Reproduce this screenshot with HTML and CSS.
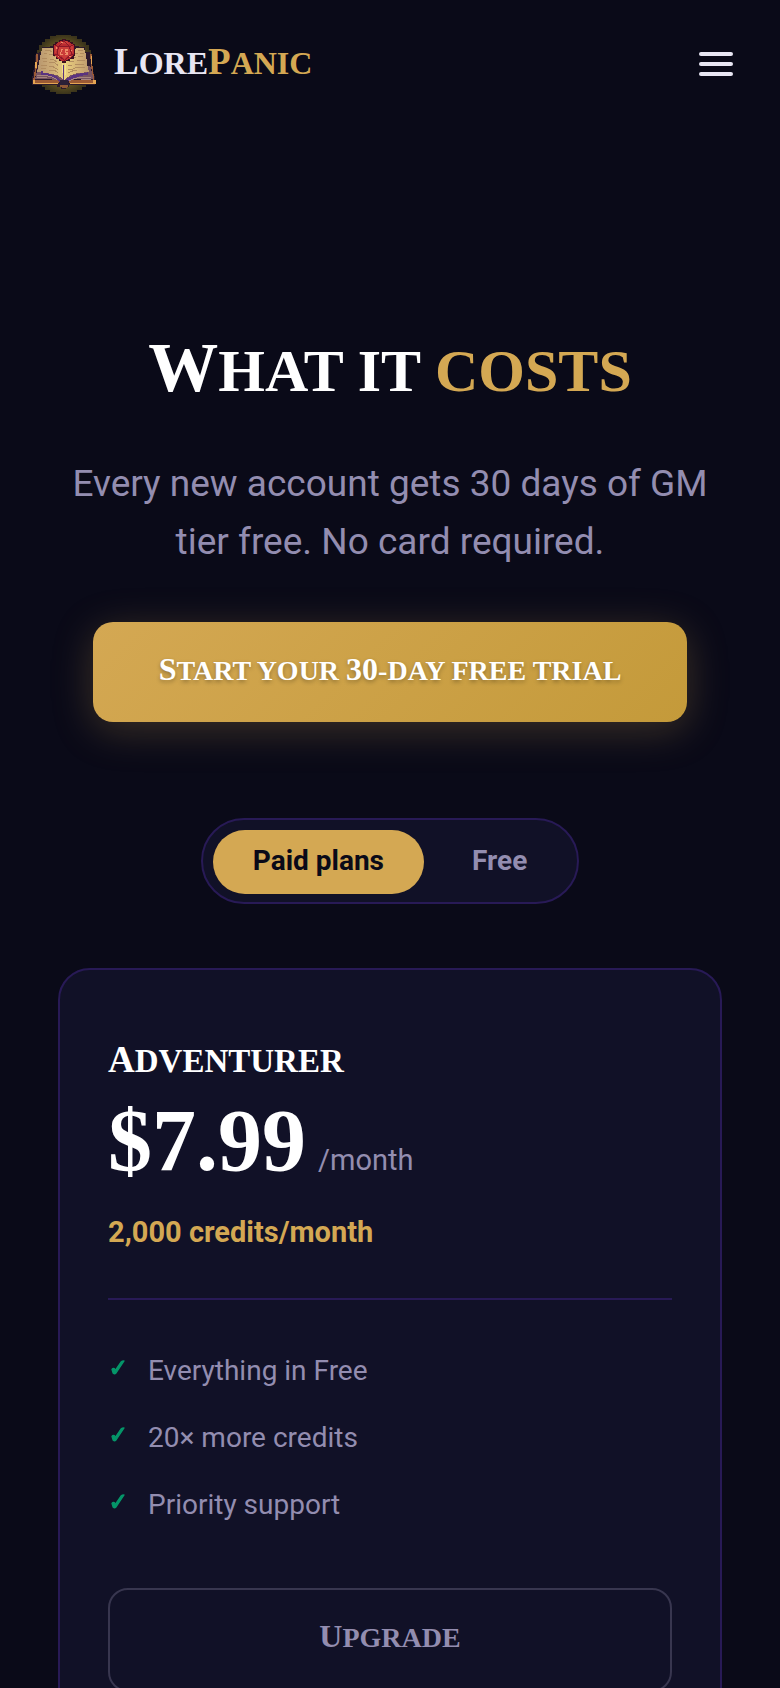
FILE: index.html
```html
<!DOCTYPE html>
<html lang="en">
<head>
<meta charset="utf-8">
<meta name="viewport" content="width=device-width, initial-scale=1">
<title>LorePanic – Pricing</title>
<link rel="stylesheet" href="styles.css">
</head>
<body>
<header class="site-header">
  <a class="brand" href="#">
    <svg class="brand-mark" viewBox="36 38 192 186" shape-rendering="crispEdges" aria-hidden="true">
      <defs>
        <radialGradient id="glow">
          <stop offset="0" stop-color="#a58e38"/>
          <stop offset=".65" stop-color="#665823"/>
          <stop offset="1" stop-color="#3b341b"/>
        </radialGradient>
        <linearGradient id="left-page">
          <stop offset="0" stop-color="#b7966e"/>
          <stop offset=".6" stop-color="#cfae78"/>
          <stop offset="1" stop-color="#e5cc7c"/>
        </linearGradient>
        <linearGradient id="right-page">
          <stop offset="0" stop-color="#ecd47e"/>
          <stop offset=".5" stop-color="#d6b577"/>
          <stop offset="1" stop-color="#bd9a6e"/>
        </linearGradient>
      </defs>
      <path fill="url(#glow)" d="M108 43h46v5h18v7h14v9h11v11h9v13h6v15h4v58h-4v15h-6v13h-9v11h-11v9h-14v7h-18v5h-46v-5H90v-7H76v-9H65v-11h-9v-13h-6v-15h-4v-58h4V88h6V75h9V64h11v-9h14v-7h18z"/>
      <path fill="#2b1a2c" d="M47 99h9v-3h10V80h24v-3h18v5h12v10h24V83h12v-5h20v3h20v14h14v8h5v26l10 46v20h-77v6h-10v5h-16v-5h-10v-6H36v-19l9-51z"/>
      <path fill="#9b5a35" d="M49 102h5v14l-9 62h72v9H39v-9l3-8zM210 102h5v18l8 58v9h-75v-9h70z"/>
      <path fill="#e5a552" d="M38 180h7v12h-7zM220 180h7v12h-7zM45 188h70v4H45zM151 188h68v4h-68zM46 124h4v20h-4zM212 108h3v24h-3z"/>
      <path fill="#775461" d="M55 138l-10 38h38l28 3 11 6 9 4 9-4 12-7 37-2h31l-9-39z"/>
      <path fill="url(#left-page)" d="M71 82h24l13 5 12 13 11 15v64l-16-13-23-6-41-5 8-39 8-34z"/>
      <path fill="url(#right-page)" d="M132 115l12-15 14-12 14-5h20l5 17 5 34 5 21-37 4-20 7-18 13z"/>
      <path fill="#5a3380" d="M64 151h4v6l24 4 18 7 15 13v8l-20-14-24-7-18-3zM129 133h4v52h-4zM138 177l20-12 20-5 25-4v7l-26 5-20 7-18 13z"/>
      <path fill="#f3df91" d="M127 127h3v32h-3zM134 120h4v44h-4z"/>
      <path fill="none" stroke="#b28d60" stroke-width="3" d="M76 91h14l7 4M72 100h9m6 3h10l7 5M67 113h15m7 4h10l12 8M69 124h11m7 3h17l11 9M62 136h18m7 3h12l16 10M62 145h17m8 4h14l12 7M174 91h14M164 100h10m7-2h10M153 111h14m6-2h15M146 124h16m8-3h24M144 135h12m8-3h27M143 148h13l12-7h28M144 158l16-7h12"/>
      <path fill="none" stroke="#a6857e" stroke-width="3" d="M52 164h22l22 6 14 7M147 181l18-7 18-3h30M52 172h28M184 177h30"/>
      <path fill="#2b2037" d="M119 180h24v11h9v4h-14v6h-14v-6h-14v-4h9z"/>
      <path fill="#8f5936" d="M120 195h25v4h-5v3h-15v-3h-5z"/>
      <path fill="#3d1020" d="M126 55h12v5h11v5h10v6h7v36h-5v8h-10v7h-12v5h-12v-5h-11v-6h-9v-8h-7V71h6v-6h10v-5h10z"/>
      <path fill="#b92c30" d="M122 61h19l11 8 9 5v29l-9 11-17 8h-9l-14-9-9-10V75l9-6z"/>
      <path fill="#cb3d39" d="M123 63h16l10 8-32 1zM105 78h10l-7 19h-4zM152 78h8v20h-4zM118 79h28l7 21-19 15-21-15z"/>
      <path fill="none" stroke="#8b1728" stroke-width="3" d="M132 61l-16 17-12-3M132 61l16 17 12-3M116 78h32l7 24-22 18-22-18zM103 102h8m43 0h8"/>
      <path fill="#ee8d69" d="M123 87h7v3h-4v6h-4v4h8v3h-11v-8h4zM135 87h8v4h-5v3h5v9h-9v-3h5v-3h-5zM124 64h5v4h-5zM107 81h4v4h-4zM153 89h4v4h-4zM113 106h4v4h-4zM148 107h4v4h-4z"/>
    </svg>
    <span class="brand-name"><span class="titling">Lore</span><span class="titling gold">Panic</span></span>
  </a>
  <button class="menu-button" type="button" aria-label="Menu">
    <span class="menu-bar"></span><span class="menu-bar"></span><span class="menu-bar"></span>
  </button>
</header>
<main class="page">
  <section class="hero">
    <h1 class="hero-title titling">What it <span class="gold">costs</span></h1>
    <p class="hero-text">Every new account gets 30 days of GM tier free. No card required.</p>
    <a class="cta" href="#"><span class="titling">Start your <span class="numeral">30</span>-day free trial</span></a>
  </section>
  <div class="plan-toggle" role="group" aria-label="Plan type">
    <button class="plan-tab plan-tab-active" type="button" aria-pressed="true">Paid plans</button>
    <button class="plan-tab" type="button" aria-pressed="false">Free</button>
  </div>
  <article class="plan-card">
    <h2 class="plan-name titling">Adventurer</h2>
    <p class="plan-price"><span class="amount">$7.99</span><span class="period">/month</span></p>
    <p class="plan-credits">2,000 credits/month</p>
    <ul class="features">
      <li><svg class="tick" viewBox="0 0 42 45" aria-hidden="true"><path d="M3 28Q6 24 10 26L13 31 31 5Q33 3 39 3L15 39Q11 43 7 40 5 36 3 28z"/></svg>Everything in Free</li>
      <li><svg class="tick" viewBox="0 0 42 45" aria-hidden="true"><path d="M3 28Q6 24 10 26L13 31 31 5Q33 3 39 3L15 39Q11 43 7 40 5 36 3 28z"/></svg>20× more credits</li>
      <li><svg class="tick" viewBox="0 0 42 45" aria-hidden="true"><path d="M3 28Q6 24 10 26L13 31 31 5Q33 3 39 3L15 39Q11 43 7 40 5 36 3 28z"/></svg>Priority support</li>
    </ul>
    <button class="upgrade" type="button"><span class="titling">Upgrade</span></button>
  </article>
</main>
</body>
</html>
```
FILE: styles.css
```css
:root {
  --bg: #0a0a18;
  --surface: #111127;
  --line: #281a56;
  --gold: #d4a853;
  --muted: #938db0;
  --light: #e8e6f3;
}

* { box-sizing: border-box; }

body {
  margin: 0;
  background: var(--bg);
  color: #fff;
  font-family: Roboto, "Liberation Sans", sans-serif;
  font-size: 28px;
  line-height: 45px;
}

h1, h2, p, ul { margin: 0; padding: 0; }

button { font: inherit; cursor: pointer; }

.gold { color: var(--gold); }

/* Capitals with a slightly larger initial */
.titling {
  display: inline-block;
  font-family: "Liberation Serif", serif;
  font-weight: 700;
  font-size: 28px;
  text-transform: uppercase;
}

.titling::first-letter,
.numeral { font-size: 32px; }

.site-header {
  display: flex;
  align-items: center;
  justify-content: space-between;
  height: 128px;
  padding: 0 32px;
}

.brand {
  display: flex;
  align-items: center;
  gap: 18px;
  color: var(--light);
  text-decoration: none;
}

.brand-mark { width: 64px; height: 62px; }

.brand-name {
  display: flex;
  padding-bottom: 4px;
}

.brand-name .titling { font-size: 32px; }

.plan-name { font-size: 33px; }

.brand-name .titling::first-letter,
.plan-name::first-letter { font-size: 37px; }

.menu-button {
  display: flex;
  flex-direction: column;
  align-items: center;
  justify-content: center;
  gap: 6px;
  width: 64px;
  height: 64px;
  padding: 0;
  border: 0;
  background: none;
}

.menu-bar {
  width: 34px;
  height: 4px;
  border-radius: 2px;
  background: var(--light);
}

.page {
  display: flex;
  flex-direction: column;
  align-items: center;
  padding: 200px 58px 64px;
}

.hero {
  display: flex;
  flex-direction: column;
  align-items: center;
  text-align: center;
}

.hero-title {
  margin-bottom: 44px;
  font-size: 60px;
  line-height: 80px;
}

.hero-title::first-letter { font-size: 70px; }

.hero-text {
  margin-bottom: 51px;
  color: var(--muted);
  font-size: 37px;
  line-height: 58px;
}

.cta {
  display: flex;
  align-items: center;
  justify-content: center;
  height: 100px;
  padding: 0 66px 4px;
  border-radius: 20px;
  background: linear-gradient(135deg, #d4a853, #c49a3a);
  box-shadow: 0 8px 40px rgba(212, 168, 83, .25);
  color: #fff;
  text-decoration: none;
  text-shadow: 0 2px 4px rgba(0, 0, 0, .3);
}

.plan-toggle {
  display: flex;
  gap: 8px;
  margin: 96px 0 64px;
  padding: 10px 10px 8px;
  border: 2px solid var(--line);
  border-radius: 43px;
  background: var(--surface);
}

.plan-tab {
  height: 64px;
  padding: 0 40px 4px;
  border: 0;
  border-radius: 32px;
  background: none;
  color: var(--muted);
  font-weight: 700;
}

.plan-tab-active {
  background: var(--gold);
  color: var(--bg);
}

.plan-card {
  width: 100%;
  padding: 66px 48px 48px;
  border: 2px solid var(--line);
  border-radius: 32px;
  background: var(--surface);
}

.plan-name {
  display: block;
  line-height: 48px;
}

.plan-price {
  display: flex;
  align-items: baseline;
  gap: 12px;
  margin: 6px 0 19px;
}

.amount {
  font-family: "Liberation Serif", serif;
  font-weight: 700;
  font-size: 88px;
  line-height: 100px;
}

.period {
  color: var(--muted);
  font-size: 29px;
}

.plan-credits {
  color: var(--gold);
  font-size: 29px;
  font-weight: 700;
}

.features {
  display: flex;
  flex-direction: column;
  gap: 22px;
  margin: 43px 0 61px;
  padding-top: 48px;
  border-top: 2px solid var(--line);
  color: var(--muted);
  list-style: none;
}

.features li {
  display: flex;
  align-items: flex-start;
  gap: 20px;
}

.tick {
  box-sizing: content-box;
  width: 14px;
  height: 15px;
  padding: 12px 3px 0;
  fill: #059669;
  stroke: #059669;
  stroke-width: 4px;
  stroke-linejoin: round;
}

.upgrade {
  display: flex;
  align-items: center;
  justify-content: center;
  width: 100%;
  height: 104px;
  padding: 0 0 6px;
  border: 2px solid #38364f;
  border-radius: 20px;
  background: none;
  color: var(--muted);
}
```
